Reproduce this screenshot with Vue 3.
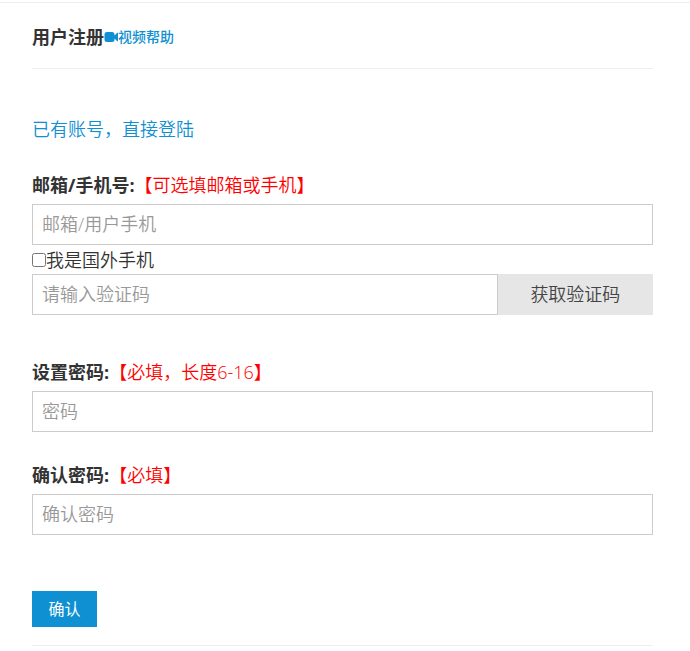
<script setup>
import { ref } from 'vue'

const account = ref('')
const foreign = ref(false)
const code = ref('')
const password = ref('')
const confirmation = ref('')
</script>

<template>
  <main class="page">
    <header class="head">
      <h1 class="title">用户注册</h1>
      <a class="help" href="#help">
        <svg class="camera" viewBox="0 0 14 12" aria-hidden="true">
          <path d="M3 1h5a2.500 2.500 0 0 1 2.500 2.500v1L13 2c.5-.5 1-.3 1 .3v7.400c0 .6-.5.8-1 .3l-2.500-2.500v1A2.500 2.500 0 0 1 8 11H3A2.500 2.500 0 0 1 .5 8.500v-5A2.500 2.500 0 0 1 3 1z" />
        </svg>视频帮助</a>
    </header>

    <a class="login" href="#login">已有账号，直接登陆</a>

    <form class="form" @submit.prevent>
      <div class="group">
        <label class="label" for="account">邮箱/手机号:<span class="hint">【可选填邮箱或手机】</span></label>
        <input id="account" v-model="account" class="field" type="text" placeholder="邮箱/用户手机">
        <label class="check"><input v-model="foreign" class="box" type="checkbox">我是国外手机</label>
        <div class="code">
          <input v-model="code" class="field" type="text" placeholder="请输入验证码" aria-label="验证码">
          <button class="send" type="button">获取验证码</button>
        </div>
      </div>

      <div class="group password">
        <label class="label" for="password">设置密码:<span class="hint">【必填，长度6-16】</span></label>
        <input id="password" v-model="password" class="field" type="password" placeholder="密码">
      </div>

      <div class="group">
        <label class="label" for="confirmation">确认密码:<span class="hint">【必填】</span></label>
        <input id="confirmation" v-model="confirmation" class="field" type="password" placeholder="确认密码">
      </div>

      <button class="submit" type="submit">确认</button>
    </form>
  </main>
</template>

<style>
body {
  background: #fff;
}
</style>

<style scoped>
.page {
  margin-top: 2px;
  padding: 0 37px 0 32px;
  border-top: 1px solid #eee;
  color: #333;
  font-family: "Open Sans", "Noto Sans CJK SC", sans-serif;
  font-size: 18px;
  font-weight: 350;
  line-height: 28px;
}

.head {
  display: flex;
  align-items: center;
  padding: 20px 0 17px;
  border-bottom: 1px solid #eee;
}

.title {
  margin: 0;
  font-size: 18px;
  font-weight: 700;
}

a {
  color: #0e90d2;
  text-decoration: none;
}

.help {
  display: flex;
  align-items: center;
  font-size: 14px;
  font-weight: 500;
}

.camera {
  width: 14px;
  height: 12px;
  fill: #0e90d2;
}

.login {
  display: block;
  width: fit-content;
  margin-top: 46px;
}

.form {
  padding-bottom: 18px;
  border-bottom: 1px solid #eee;
}

.group {
  display: flex;
  flex-direction: column;
  margin-top: 28px;
}

.group + .group {
  margin-top: 29px;
}

.group + .password {
  margin-top: 43px;
}

.label {
  margin-bottom: 5px;
  font-weight: 700;
}

.hint {
  color: #f00;
  font-weight: 350;
}

.field {
  box-sizing: border-box;
  width: 100%;
  height: 41px;
  padding: 0 9px 1px;
  border: 1px solid #ccc;
  border-radius: 0;
  background: #fff;
  color: #555;
  font: inherit;
}

.field::placeholder {
  color: #999;
  opacity: 1;
}

.check {
  display: flex;
  align-items: center;
  width: fit-content;
  padding-top: 1px;
}

.box {
  width: 14px;
  height: 14px;
  margin: 0;
}

.code {
  display: grid;
  grid-template-columns: 3fr 1fr;
}

.send,
.submit {
  border: 0;
  font: inherit;
  cursor: pointer;
}

.send {
  padding: 0 0 1px;
  background: #e6e6e6;
  color: #444;
}

.submit {
  display: block;
  min-width: 65px;
  height: 36px;
  margin-top: 56px;
  padding: 0 16px;
  background: #0e90d2;
  color: #fff;
  font-size: 16px;
  font-weight: 400;
  line-height: 20px;
}
</style>
